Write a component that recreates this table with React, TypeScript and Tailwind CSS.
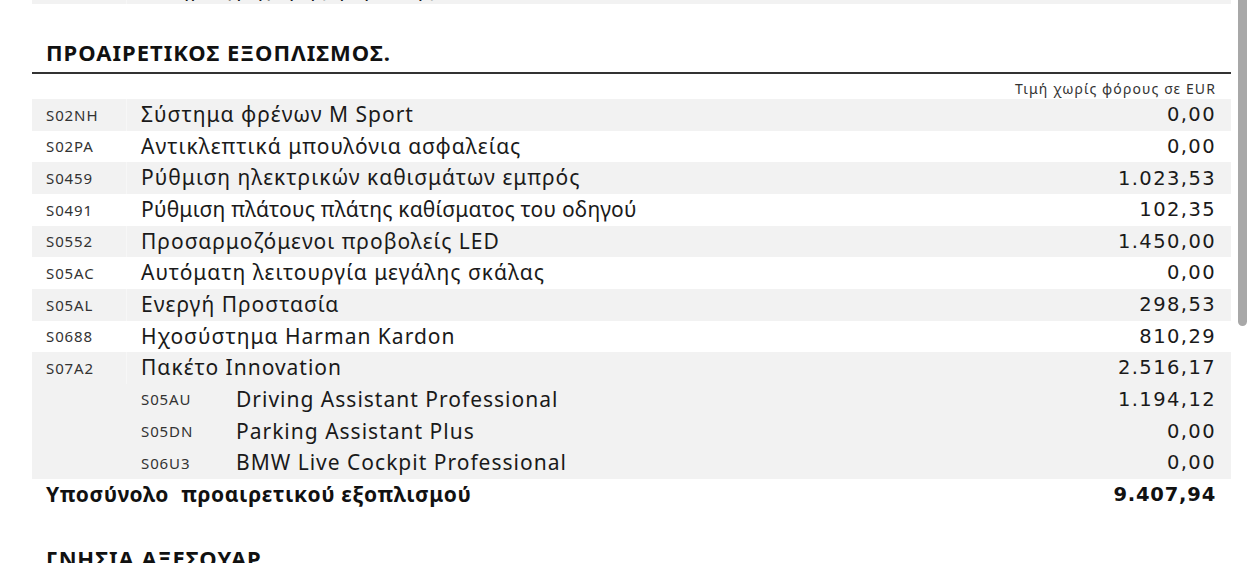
import React from "react";

type Row = { code: string; desc: string; price: string; sub?: boolean };

const rows: Row[] = [
  { code: "S02NH", desc: "Σύστημα φρένων M Sport", price: "0,00" },
  { code: "S02PA", desc: "Αντικλεπτικά μπουλόνια ασφαλείας", price: "0,00" },
  { code: "S0459", desc: "Ρύθμιση ηλεκτρικών καθισμάτων εμπρός", price: "1.023,53" },
  { code: "S0491", desc: "Ρύθμιση πλάτους πλάτης καθίσματος του οδηγού", price: "102,35" },
  { code: "S0552", desc: "Προσαρμοζόμενοι προβολείς LED", price: "1.450,00" },
  { code: "S05AC", desc: "Αυτόματη λειτουργία μεγάλης σκάλας", price: "0,00" },
  { code: "S05AL", desc: "Ενεργή Προστασία", price: "298,53" },
  { code: "S0688", desc: "Ηχοσύστημα Harman Kardon", price: "810,29" },
  { code: "S07A2", desc: "Πακέτο Innovation", price: "2.516,17" },
  { code: "S05AU", desc: "Driving Assistant Professional", price: "1.194,12", sub: true },
  { code: "S05DN", desc: "Parking Assistant Plus", price: "0,00", sub: true },
  { code: "S06U3", desc: "BMW Live Cockpit Professional", price: "0,00", sub: true },
];

const font = { fontFamily: '"Noto Sans", "Open Sans", sans-serif' };
const numFont = { fontFamily: '"DejaVu Sans", "Noto Sans", sans-serif' };

export default function App() {
  return (
    <div className="relative h-[563px] w-[1256px] overflow-hidden bg-white text-[#1a1a1a]" style={font}>
      {/* scrollbar */}
      <div className="absolute right-[9px] top-0 h-[326px] w-[9px] rounded-b-[5px] bg-[#a8a8a8]" />
      <div className="ml-[32px] w-[1199px]">
        {/* cut-off previous row */}
        <div className="mt-[-28px] flex h-[32px] bg-[#f2f2f2] text-[21px] leading-[32px] tracking-[1px]">
          <div className="w-[95px] border-r border-[#f7f7f7]" />
          <div className="flex-1 pl-[14px]">
            <span className="ml-[-30px]">(</span> Σύστημα γρήγορης φόρτισης (DC),
          </div>
          <div className="w-[294px] pr-[15px] text-right" style={numFont}>,</div>
        </div>
        <div className="mt-[35px] pl-[14px] text-[22px] font-bold leading-[26px] tracking-[1px] text-[#111]">
          ΠΡΟΑΙΡΕΤΙΚΟΣ ΕΞΟΠΛΙΣΜΟΣ.
        </div>
        <div className="mt-[7px] h-[2px] bg-[#333]" />
        <div className="flex h-[25px] items-center justify-end pr-[15px] pt-[4px] text-[14px] tracking-[1.1px] text-[#333]">
          Τιμή χωρίς φόρους σε EUR
        </div>
        {rows.map((r, i) => {
          const bg = r.sub || i % 2 === 0 ? "bg-[#f2f2f2]" : "bg-white";
          return (
            <div key={r.code} className={`flex h-[31.67px] items-center ${bg}`}>
              <div
                className={`flex h-full w-[95px] items-center border-r ${
                  r.sub ? "border-[#f2f2f2]" : i % 2 === 0 ? "border-[#f7f7f7]" : "border-white"
                } pl-[14px] text-[15px] tracking-[0.9px] text-[#333]`}
              >
                {r.sub ? "" : r.code}
              </div>
              <div className="flex flex-1 items-center pl-[14px] text-[21px] tracking-[1px]">
                {r.sub ? (
                  <>
                    <span className="w-[95px] text-[15px] tracking-[0.9px] text-[#333]">{r.code}</span>
                    <span>{r.desc}</span>
                  </>
                ) : (
                  <span className={r.code === "S0491" ? "tracking-[0.2px]" : ""}>{r.desc}</span>
                )}
              </div>
              <div className="w-[294px] pr-[15px] text-right text-[19.5px] tracking-[1.4px]" style={numFont}>
                {r.price}
              </div>
            </div>
          );
        })}
        <div className="flex h-[31.67px] items-center text-[#111]">
          <div className="flex-1 whitespace-pre pl-[14px] text-[21px] font-bold tracking-[0.6px]">
            Υποσύνολο  προαιρετικού εξοπλισμού
          </div>
          <div className="pr-[15px] text-right text-[19.5px] font-bold tracking-[0.8px]" style={numFont}>
            9.407,94
          </div>
        </div>
        <div className="mt-[34px] pl-[14px] text-[22px] font-bold leading-[26px] tracking-[1px] text-[#111]">
          ΓΝΗΣΙΑ ΑΞΕΣΟΥΑΡ.
        </div>
      </div>
    </div>
  );
}
